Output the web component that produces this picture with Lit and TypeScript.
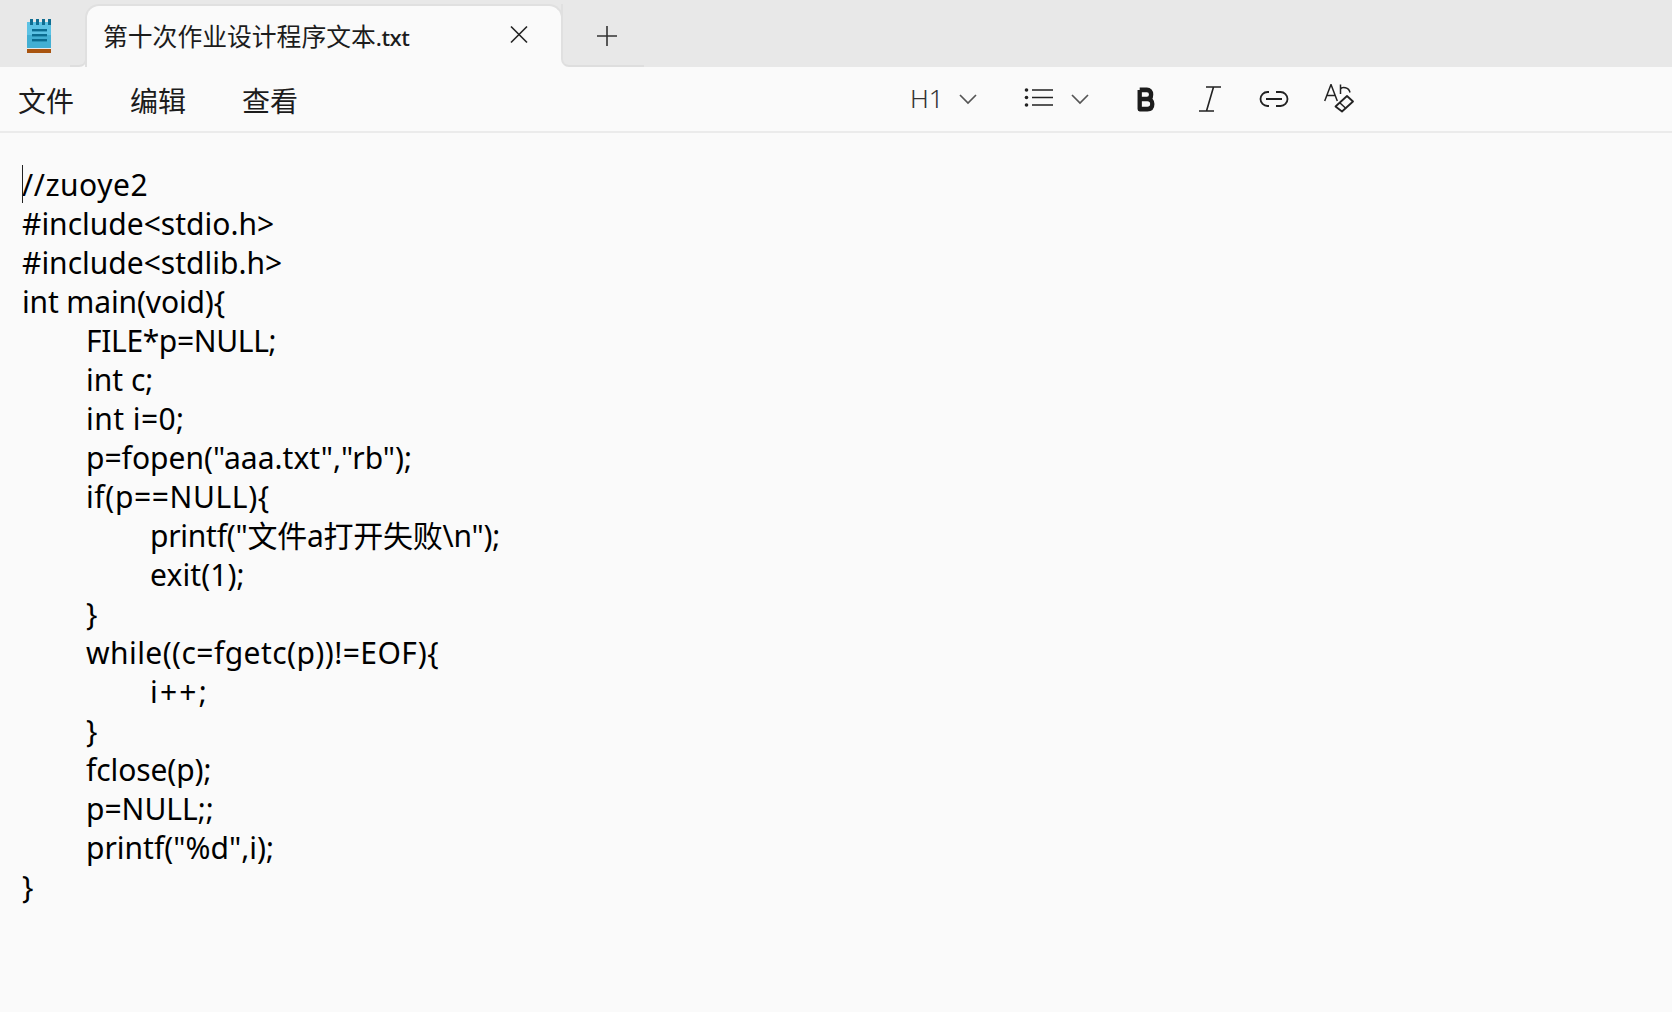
import { LitElement, html, css, svg } from "lit";
import { customElement } from "lit/decorators.js";

const LINES: [string, number][] = [
  ["//zuoye2", 0.53],
  ["#include<stdio.h>", 0],
  ["#include<stdlib.h>", 0],
  ["int main(void){", -0.14],
  ["\tFILE*p=NULL;", -0.36],
  ["\tint c;", 0],
  ["\tint i=0;", 0.45],
  ['\tp=fopen("aaa.txt","rb");', 0],
  ["\tif(p==NULL){", 0.62],
  ['\t\tprintf("文件a打开失败\\n");', -0.25],
  ["\t\texit(1);", 0.1],
  ["\t}", -0.8],
  ["\twhile((c=fgetc(p))!=EOF){", 0.43],
  ["\t\ti++;", 2.2],
  ["\t}", -0.8],
  ["\tfclose(p);", -0.1],
  ["\tp=NULL;;", 0],
  ['\tprintf("%d",i);', 0],
  ["}", -0.8],
];

@customElement("app-root")
export class AppRoot extends LitElement {
  static styles = css`
    :host {
      display: flex;
      flex-direction: column;
      width: 1672px;
      height: 1012px;
      overflow: hidden;
      background: #fafafa;
      color: #1a1a1a;
      font-family: "Noto Sans", "Noto Sans CJK SC", sans-serif;
    }
    .tabbar {
      display: flex;
      align-items: flex-end;
      height: 67px;
      flex: none;
      background: #e8e8e8;
    }
    .appicon {
      position: relative;
      width: 85px;
      height: 67px;
      flex: none;
      display: flex;
      align-items: flex-start;
      padding: 18px 0 0 23px;
      box-sizing: border-box;
    }
    .appicon::after {
      content: "";
      position: absolute;
      right: 0;
      bottom: 0;
      width: 8px;
      height: 8px;
      background: #fafafa;
    }
    .appicon svg { width: 30px; height: 36px; }
    .tab {
      position: relative;
      width: 478px;
      height: 63px;
      flex: none;
      box-sizing: border-box;
      display: flex;
      align-items: center;
      justify-content: space-between;
      padding: 0 31px 3px 16px;
      background: #fafafa;
      border: 2px solid #e0e0e0;
      border-bottom: 0;
      border-radius: 14px 14px 0 0;
      font-size: 24.8px;
      color: #1c1c1c;
    }
    .tab::before {
      content: "";
      position: absolute;
      left: -17px;
      bottom: 0;
      width: 17px;
      height: 12px;
      box-sizing: border-box;
      background: #e8e8e8;
      border-bottom: 2px solid #dedede;
      border-right: 2px solid #e0e0e0;
      border-bottom-right-radius: 8px;
    }
    .tab::after {
      content: "";
      position: absolute;
      right: -10px;
      bottom: 0;
      width: 10px;
      height: 8px;
      background: #fafafa;
    }
    .ext { font-size: 22.5px; font-weight: 500; letter-spacing: -0.5px; }
    .tab svg { width: 22px; height: 22px; }
    .plus {
      position: relative;
      z-index: 1;
      width: 83px;
      height: 63px;
      margin-left: -2px;
      flex: none;
      display: flex;
      align-items: center;
      justify-content: center;
      box-sizing: border-box;
      padding: 3px 0 0 6px;
      background: #e8e8e8;
      border-left: 2px solid #e0e0e0;
      border-bottom: 2px solid #dedede;
      border-bottom-left-radius: 8px;
    }
    .plus svg { width: 22px; height: 22px; }
    .toolbar {
      display: flex;
      align-items: center;
      height: 66px;
      flex: none;
      box-sizing: border-box;
      border-bottom: 2px solid #ebebeb;
      background: #fafafa;
    }
    .menu {
      display: flex;
      gap: 56px;
      padding: 1px 0 0 18px;
      font-size: 28px;
      width: 890px;
      box-sizing: border-box;
      color: #1c1c1c;
    }
    .tools { display: flex; align-items: center; }
    .h1 {
      width: 33px;
      font-size: 26px;
      font-weight: 300;
      color: #333;
      margin: -2px 0 0 20px;
    }
    .tools svg { display: block; }
    .chev1 { margin-left: 16px; }
    .list { margin-left: 47px; margin-top: -2px; }
    .chev2 { margin-left: 17px; }
    .bold { margin-left: 48px; }
    .italic { margin-left: 43px; }
    .link { margin-left: 37px; }
    .clear { margin-left: 35px; }
    .editor {
      flex: 1;
      box-sizing: border-box;
      padding: 32px 0 0 22px;
      position: relative;
      font-size: 30px;
      line-height: 39px;
      color: #000;
      white-space: pre;
      tab-size: 64px;
    }
    .line { display: block; height: 39px; }
    .caret {
      position: absolute;
      left: 22px;
      top: 32px;
      width: 1px;
      height: 38px;
      background: #222;
    }
  `;

  render() {
    const chevron = svg`<path d="M1 4 L9 12 L17 4" fill="none" stroke="#555" stroke-width="1.7"/>`;
    return html`
      <div class="tabbar">
        <div class="appicon">
          <svg viewBox="0 0 30 36">
            <rect x="4" y="4" width="24" height="26" fill="#5cc2e4"/>
            <rect x="4" y="17" width="24" height="13" fill="#43afd3"/>
            <rect x="4" y="31" width="24" height="4" fill="#a9540f"/>
            <rect x="7" y="1" width="3" height="6" fill="#0f6d91"/>
            <rect x="13" y="1" width="3" height="6" fill="#0f6d91"/>
            <rect x="19" y="1" width="3" height="6" fill="#0f6d91"/>
            <rect x="25" y="1" width="3" height="6" fill="#0f6d91"/>
            <rect x="9" y="11" width="15" height="2.4" fill="#0b6c90"/>
            <rect x="9" y="16" width="15" height="2.4" fill="#0b6c90"/>
            <rect x="9" y="21" width="15" height="2.4" fill="#0b6c90"/>
          </svg>
        </div>
        <div class="tab">
          <span>第十次作业设计程序文本<span class="ext">.txt</span></span>
          <svg viewBox="0 0 22 22"><path d="M3 2.500 L19 18.500 M19 2.500 L3 18.500" stroke="#222" stroke-width="1.6" fill="none"/></svg>
        </div>
        <div class="plus">
          <svg viewBox="0 0 22 22"><path d="M11 1 V21 M1 11 H21" stroke="#333" stroke-width="1.6" fill="none"/></svg>
        </div>
      </div>
      <div class="toolbar">
        <div class="menu"><span>文件</span><span>编辑</span><span>查看</span></div>
        <div class="tools">
          <span class="h1">H1</span>
          <svg class="chev1" width="18" height="16" viewBox="0 0 18 16">${chevron}</svg>
          <svg class="list" width="30" height="22" viewBox="0 0 30 22">
            <g fill="#222"><circle cx="2.500" cy="3" r="1.800"/><circle cx="2.500" cy="10.500" r="1.800"/><circle cx="2.500" cy="18" r="1.800"/></g>
            <path d="M8 3 H29 M8 10.500 H29 M8 18 H29" stroke="#222" stroke-width="1.600"/>
          </svg>
          <svg class="chev2" width="18" height="16" viewBox="0 0 18 16">${chevron}</svg>
          <svg class="bold" width="18" height="25" viewBox="0 0 20 26" preserveAspectRatio="none">
            <path d="M3 3 V23 H11.500 C15 23 17 21 17 17.700 C17 14.500 15 12.500 11.500 12.500 H3 M11 12.500 C14 12.500 15.700 11 15.700 7.700 C15.700 5 14 3 11 3 H3" fill="none" stroke="#1c1c1c" stroke-width="4.800" stroke-linejoin="round"/>
          </svg>
          <svg class="italic" width="24" height="26" viewBox="0 0 24 26">
            <path d="M8 1 H23 M1 25 H16 M15.500 1 L8.500 25" stroke="#222" stroke-width="1.600" fill="none"/>
          </svg>
          <svg class="link" width="30" height="18" viewBox="0 0 30 18">
            <path d="M10 2 H8.500 A7 7 0 0 0 8.500 16 H10 M17 2 H21.500 A7 7 0 0 1 21.500 16 H17 M7 9 H23" stroke="#222" stroke-width="1.800" fill="none"/>
          </svg>
          <svg class="clear" width="30" height="30" viewBox="0 0 30 30">
            <path d="M0.700 17 L7 0.500 L13.300 17 M3 11.500 H11 M16.500 0.500 V10 M16.500 5 C18 2.500 25 3 26 8.500" stroke="#222" stroke-width="1.500" fill="none"/>
            <path d="M11.500 22.500 L23 12 L29 17.500 L18 27.500 Z" fill="#fafafa" stroke="#222" stroke-width="1.800" stroke-linejoin="round"/>
            <path d="M15.500 18.500 L22 24.500" stroke="#222" stroke-width="1.500" fill="none"/>
          </svg>
        </div>
      </div>
      <div class="editor">${LINES.map(([t, ls]) => html`<span class="line" style="letter-spacing:${ls}px">${t}</span>`)}<i class="caret"></i></div>
    `;
  }
}
